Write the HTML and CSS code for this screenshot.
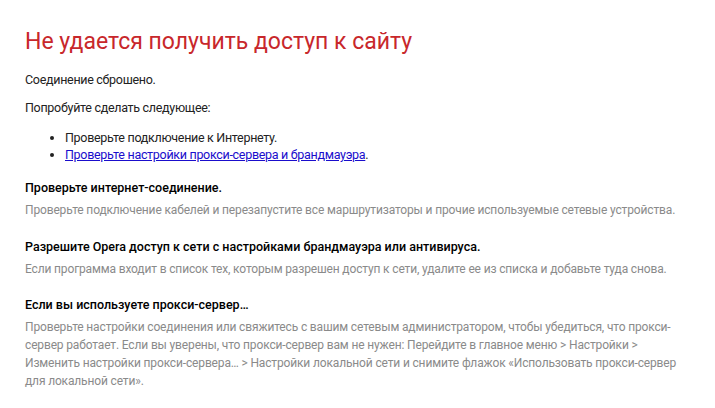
FILE: index.html
```html
<!DOCTYPE html>
<html lang="ru">
<head>
<meta charset="utf-8">
<title>Не удается получить доступ к сайту</title>
<link rel="stylesheet" href="styles.css">
</head>
<body>
<main class="page">
  <h1 class="title">Не удается получить доступ к сайту</h1>
  <p class="msg">Соединение сброшено.</p>
  <p class="msg">Попробуйте сделать следующее:</p>
  <ul class="tips">
    <li>Проверьте подключение к Интернету.</li>
    <li><a href="#" class="link">Проверьте настройки прокси-сервера и брандмауэра</a>.</li>
  </ul>
  <section class="block">
    <h2 class="block-title">Проверьте интернет-соединение.</h2>
    <p class="block-text">Проверьте подключение кабелей и перезапустите все маршрутизаторы и прочие используемые сетевые устройства.</p>
  </section>
  <section class="block">
    <h2 class="block-title">Разрешите Opera доступ к сети с настройками брандмауэра или антивируса.</h2>
    <p class="block-text">Если программа входит в список тех, которым разрешен доступ к сети, удалите ее из списка и добавьте туда снова.</p>
  </section>
  <section class="block">
    <h2 class="block-title">Если вы используете прокси-сервер…</h2>
    <p class="block-text">Проверьте настройки соединения или свяжитесь с вашим сетевым администратором, чтобы убедиться, что прокси-сервер работает. Если вы уверены, что прокси-сервер вам не нужен: Перейдите в главное меню &gt; Настройки &gt; Изменить настройки прокси-сервера… &gt; Настройки локальной сети и снимите флажок «Использовать прокси-сервер для локальной сети».</p>
  </section>
</main>
</body>
</html>
```

FILE: styles.css
```css
html, body {
  margin: 0;
  padding: 0;
  background: #ffffff;
}
.page {
  padding: 27px 25px 0 25px;
  font-family: Roboto, "Noto Sans", sans-serif;
  font-size: 12.5px;
  letter-spacing: -0.3px;
  color: #222222;
  max-width: 665px;
}
.title {
  margin: 0 0 14px 0;
  font-size: 23px;
  font-weight: 400;
  letter-spacing: 0;
  line-height: 30px;
  color: #c8272b;
}
.msg {
  margin: 0 0 11px 0;
  line-height: 17px;
}
.tips {
  margin: 13px 0 16px 0;
  padding-left: 40px;
  line-height: 17px;
}
.link {
  color: #1a0dcc;
  text-decoration: underline;
}
.block {
  margin-top: 0;
  margin-bottom: 18.5px;
}
.block-title {
  margin: 0 0 5px 0;
  font-size: 12.5px;
  font-weight: 500;
  letter-spacing: 0;
  line-height: 17px;
  color: #000000;
}
.block-text {
  margin: 0;
  font-size: 12px;
  letter-spacing: -0.15px;
  line-height: 18px;
  color: #8a8a8a;
}
```
